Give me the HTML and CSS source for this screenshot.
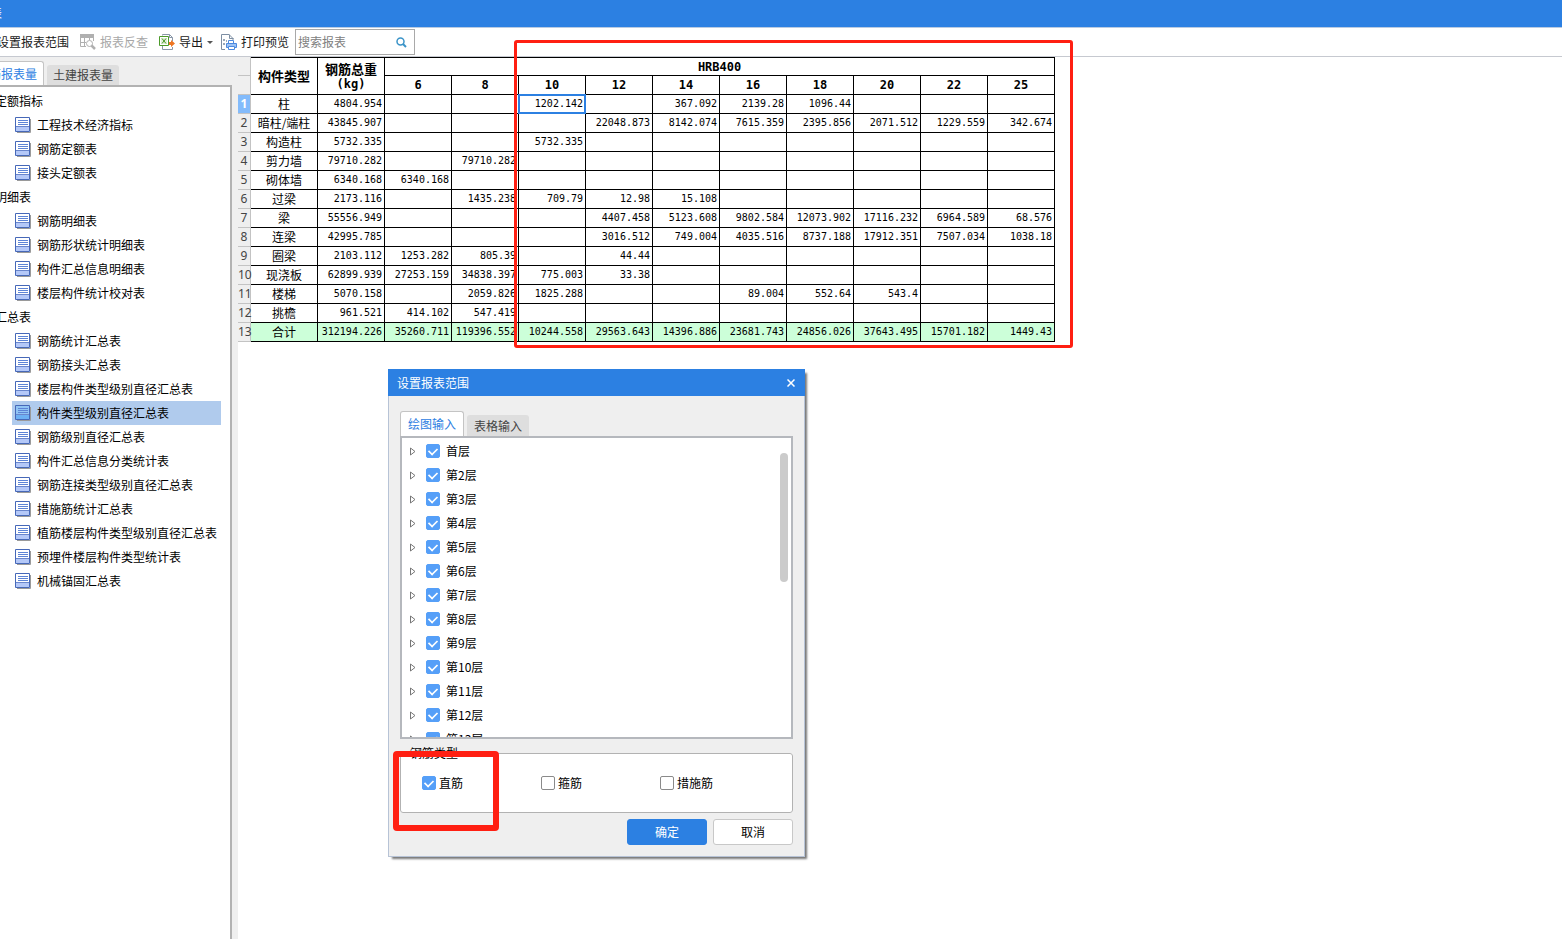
FILE: index.html
```
<!DOCTYPE html>
<html lang="zh-CN">
<head>
<meta charset="utf-8">
<title>报表</title>
<link rel="stylesheet" href="styles.css">
</head>
<body>
<svg class="defs" aria-hidden="true">
  <symbol id="sheet" viewBox="0 0 16 16">
    <path d="M2 15.500h13.500V2" fill="none" stroke="#9a9a9a"/>
    <path d="M.5.5h14v14H.5z" class="sheet-page" stroke="#4668b8"/>
    <path d="M1 10h13v4H1z" class="sheet-foot"/>
    <path d="M1 9.500h13" stroke="#6a86cc"/>
    <path d="M3 3.500h10M3 5.500h10M3 7.500h10" stroke="#5d84d6"/>
  </symbol>
</svg>
<header class="titlebar">报表</header>
<div class="toolbar">
  <button class="tool tool-range">设置报表范围</button>
  <button class="tool tool-check" disabled>
    <svg class="icon" viewBox="0 0 16 16" fill="none" stroke="#b0b0b0">
      <path d="M0 0h14v4H0z" fill="#b0b0b0" stroke="none"/>
      <path d="M.5 1v11.500H6M13.500 3v4M4.500 4v8M9.500 4v2M1 8.500h5"/>
      <circle cx="9.500" cy="9.500" r="3" fill="#fff"/>
      <path d="M11.500 11.500l3.500 3.500" stroke-width="2.500"/>
    </svg>报表反查</button>
  <button class="tool tool-export">
    <svg class="icon" viewBox="0 0 16 16" fill="none">
      <path d="M3.500 1.500v-1h7l3 3v4M13.500 13v2.500h-10V12" stroke="#8a97a8"/>
      <path d="M10.500.5v3h3" stroke="#8a97a8"/>
      <path d="M.5 2.500h9v9h-9z" fill="#fff" stroke="#4c9a2a"/>
      <path d="M2 4h6v6H2z" fill="#e0f0d8"/>
      <path d="M3 4.500l4 5M7 4.500l-4 5" stroke="#4c9a2a"/>
      <path d="M10 8h2V6l4 3.500-4 3.500v-2h-2z" fill="#ee7623"/>
    </svg>导出<span class="caret"></span></button>
  <button class="tool tool-print">
    <svg class="icon" viewBox="0 0 16 16" fill="none">
      <path d="M4 15.500H.5V.5H8l4 4V6" stroke="#7d8ea3"/>
      <path d="M8.500.5v4h4" stroke="#7d8ea3"/>
      <path d="M2 5h2v2H2zM5 6h1v2H5zM2 9h2v2H2z" fill="#9aa8b8"/>
      <path d="M7.500 9.500v-3h5v3" fill="#fff" stroke="#4c8ae0"/>
      <path d="M5.500 9.500h10v4h-10z" fill="#9cc2f5" stroke="#4c8ae0"/>
      <path d="M7.500 12.500h6v3h-6z" fill="#fff" stroke="#4c8ae0"/>
    </svg>打印预览</button>
  <div class="search">
    <input class="search-input" type="text" placeholder="搜索报表" aria-label="搜索报表">
    <svg class="search-icon" viewBox="0 0 11 11" fill="none" stroke="#3b94c8"><circle cx="4.500" cy="4.500" r="3.500" stroke-width="1.500"/><path d="M7 7l3 3" stroke-width="2"/></svg>
  </div>
</div>
<main class="workspace">
  <aside class="sidebar">
    <div class="side-tabs">
      <button class="side-tab side-tab-on">钢筋报表量</button>
      <button class="side-tab">土建报表量</button>
    </div>
    <nav class="side-panel">
      <div class="group">定额指标</div>
      <a class="item" href="#"><svg class="icon"><use href="#sheet"/></svg>工程技术经济指标</a>
      <a class="item" href="#"><svg class="icon"><use href="#sheet"/></svg>钢筋定额表</a>
      <a class="item" href="#"><svg class="icon"><use href="#sheet"/></svg>接头定额表</a>
      <div class="group">明细表</div>
      <a class="item" href="#"><svg class="icon"><use href="#sheet"/></svg>钢筋明细表</a>
      <a class="item" href="#"><svg class="icon"><use href="#sheet"/></svg>钢筋形状统计明细表</a>
      <a class="item" href="#"><svg class="icon"><use href="#sheet"/></svg>构件汇总信息明细表</a>
      <a class="item" href="#"><svg class="icon"><use href="#sheet"/></svg>楼层构件统计校对表</a>
      <div class="group">汇总表</div>
      <a class="item" href="#"><svg class="icon"><use href="#sheet"/></svg>钢筋统计汇总表</a>
      <a class="item" href="#"><svg class="icon"><use href="#sheet"/></svg>钢筋接头汇总表</a>
      <a class="item" href="#"><svg class="icon"><use href="#sheet"/></svg>楼层构件类型级别直径汇总表</a>
      <a class="item item-on" href="#"><svg class="icon"><use href="#sheet"/></svg>构件类型级别直径汇总表</a>
      <a class="item" href="#"><svg class="icon"><use href="#sheet"/></svg>钢筋级别直径汇总表</a>
      <a class="item" href="#"><svg class="icon"><use href="#sheet"/></svg>构件汇总信息分类统计表</a>
      <a class="item" href="#"><svg class="icon"><use href="#sheet"/></svg>钢筋连接类型级别直径汇总表</a>
      <a class="item" href="#"><svg class="icon"><use href="#sheet"/></svg>措施筋统计汇总表</a>
      <a class="item" href="#"><svg class="icon"><use href="#sheet"/></svg>植筋楼层构件类型级别直径汇总表</a>
      <a class="item" href="#"><svg class="icon"><use href="#sheet"/></svg>预埋件楼层构件类型统计表</a>
      <a class="item" href="#"><svg class="icon"><use href="#sheet"/></svg>机械锚固汇总表</a>
    </nav>
  </aside>
  <section class="report">
    <table class="grid">
      <colgroup><col class="col-no"><col class="col" span="12"></colgroup>
      <thead>
        <tr><td class="no"></td><th class="cjk" rowspan="2">构件类型</th><th class="cjk" rowspan="2">钢筋总重<br><span class="unit">(kg)</span></th><th colspan="10">HRB400</th></tr>
        <tr><td class="no"></td><th>6</th><th>8</th><th>10</th><th>12</th><th>14</th><th>16</th><th>18</th><th>20</th><th>22</th><th>25</th></tr>
      </thead>
      <tbody>
        <tr><td class="no no-on">1</td><td class="name">柱</td><td>4804.954</td><td></td><td></td><td class="picked">1202.142</td><td></td><td>367.092</td><td>2139.28</td><td>1096.44</td><td></td><td></td><td></td></tr>
        <tr><td class="no">2</td><td class="name">暗柱/端柱</td><td>43845.907</td><td></td><td></td><td></td><td>22048.873</td><td>8142.074</td><td>7615.359</td><td>2395.856</td><td>2071.512</td><td>1229.559</td><td>342.674</td></tr>
        <tr><td class="no">3</td><td class="name">构造柱</td><td>5732.335</td><td></td><td></td><td>5732.335</td><td></td><td></td><td></td><td></td><td></td><td></td><td></td></tr>
        <tr><td class="no">4</td><td class="name">剪力墙</td><td>79710.282</td><td></td><td>79710.282</td><td></td><td></td><td></td><td></td><td></td><td></td><td></td><td></td></tr>
        <tr><td class="no">5</td><td class="name">砌体墙</td><td>6340.168</td><td>6340.168</td><td></td><td></td><td></td><td></td><td></td><td></td><td></td><td></td><td></td></tr>
        <tr><td class="no">6</td><td class="name">过梁</td><td>2173.116</td><td></td><td>1435.238</td><td>709.79</td><td>12.98</td><td>15.108</td><td></td><td></td><td></td><td></td><td></td></tr>
        <tr><td class="no">7</td><td class="name">梁</td><td>55556.949</td><td></td><td></td><td></td><td>4407.458</td><td>5123.608</td><td>9802.584</td><td>12073.902</td><td>17116.232</td><td>6964.589</td><td>68.576</td></tr>
        <tr><td class="no">8</td><td class="name">连梁</td><td>42995.785</td><td></td><td></td><td></td><td>3016.512</td><td>749.004</td><td>4035.516</td><td>8737.188</td><td>17912.351</td><td>7507.034</td><td>1038.18</td></tr>
        <tr><td class="no">9</td><td class="name">圈梁</td><td>2103.112</td><td>1253.282</td><td>805.39</td><td></td><td>44.44</td><td></td><td></td><td></td><td></td><td></td><td></td></tr>
        <tr><td class="no">10</td><td class="name">现浇板</td><td>62899.939</td><td>27253.159</td><td>34838.397</td><td>775.003</td><td>33.38</td><td></td><td></td><td></td><td></td><td></td><td></td></tr>
        <tr><td class="no">11</td><td class="name">楼梯</td><td>5070.158</td><td></td><td>2059.826</td><td>1825.288</td><td></td><td></td><td>89.004</td><td>552.64</td><td>543.4</td><td></td><td></td></tr>
        <tr><td class="no">12</td><td class="name">挑檐</td><td>961.521</td><td>414.102</td><td>547.419</td><td></td><td></td><td></td><td></td><td></td><td></td><td></td><td></td></tr>
        <tr class="total"><td class="no">13</td><td class="name">合计</td><td>312194.226</td><td>35260.711</td><td>119396.552</td><td>10244.558</td><td>29563.643</td><td>14396.886</td><td>23681.743</td><td>24856.026</td><td>37643.495</td><td>15701.182</td><td>1449.43</td></tr>
      </tbody>
    </table>
    <div class="mark mark-table"></div>
  </section>
</main>
<div class="dialog" role="dialog" aria-labelledby="dialog-title">
  <div class="dialog-head">
    <span id="dialog-title">设置报表范围</span>
    <button class="close" aria-label="关闭"><svg class="close-icon" viewBox="0 0 8 8" stroke="#fff" stroke-width="1.500"><path d="M.5.5l7 7M7.500.5l-7 7"/></svg></button>
  </div>
  <div class="dialog-body">
    <div class="tabs">
      <button class="tab tab-on">绘图输入</button>
      <button class="tab">表格输入</button>
    </div>
    <div class="floors">
      <div class="floor"><button class="expand" aria-label="展开"><svg class="tri" viewBox="0 0 6 9"><path d="M.5 1v7l4.500-3.500z"/></svg></button><label class="choice"><input class="check" type="checkbox" checked>首层</label></div>
      <div class="floor"><button class="expand" aria-label="展开"><svg class="tri" viewBox="0 0 6 9"><path d="M.5 1v7l4.500-3.500z"/></svg></button><label class="choice"><input class="check" type="checkbox" checked>第2层</label></div>
      <div class="floor"><button class="expand" aria-label="展开"><svg class="tri" viewBox="0 0 6 9"><path d="M.5 1v7l4.500-3.500z"/></svg></button><label class="choice"><input class="check" type="checkbox" checked>第3层</label></div>
      <div class="floor"><button class="expand" aria-label="展开"><svg class="tri" viewBox="0 0 6 9"><path d="M.5 1v7l4.500-3.500z"/></svg></button><label class="choice"><input class="check" type="checkbox" checked>第4层</label></div>
      <div class="floor"><button class="expand" aria-label="展开"><svg class="tri" viewBox="0 0 6 9"><path d="M.5 1v7l4.500-3.500z"/></svg></button><label class="choice"><input class="check" type="checkbox" checked>第5层</label></div>
      <div class="floor"><button class="expand" aria-label="展开"><svg class="tri" viewBox="0 0 6 9"><path d="M.5 1v7l4.500-3.500z"/></svg></button><label class="choice"><input class="check" type="checkbox" checked>第6层</label></div>
      <div class="floor"><button class="expand" aria-label="展开"><svg class="tri" viewBox="0 0 6 9"><path d="M.5 1v7l4.500-3.500z"/></svg></button><label class="choice"><input class="check" type="checkbox" checked>第7层</label></div>
      <div class="floor"><button class="expand" aria-label="展开"><svg class="tri" viewBox="0 0 6 9"><path d="M.5 1v7l4.500-3.500z"/></svg></button><label class="choice"><input class="check" type="checkbox" checked>第8层</label></div>
      <div class="floor"><button class="expand" aria-label="展开"><svg class="tri" viewBox="0 0 6 9"><path d="M.5 1v7l4.500-3.500z"/></svg></button><label class="choice"><input class="check" type="checkbox" checked>第9层</label></div>
      <div class="floor"><button class="expand" aria-label="展开"><svg class="tri" viewBox="0 0 6 9"><path d="M.5 1v7l4.500-3.500z"/></svg></button><label class="choice"><input class="check" type="checkbox" checked>第10层</label></div>
      <div class="floor"><button class="expand" aria-label="展开"><svg class="tri" viewBox="0 0 6 9"><path d="M.5 1v7l4.500-3.500z"/></svg></button><label class="choice"><input class="check" type="checkbox" checked>第11层</label></div>
      <div class="floor"><button class="expand" aria-label="展开"><svg class="tri" viewBox="0 0 6 9"><path d="M.5 1v7l4.500-3.500z"/></svg></button><label class="choice"><input class="check" type="checkbox" checked>第12层</label></div>
      <div class="floor"><button class="expand" aria-label="展开"><svg class="tri" viewBox="0 0 6 9"><path d="M.5 1v7l4.500-3.500z"/></svg></button><label class="choice"><input class="check" type="checkbox" checked>第13层</label></div>
      <div class="thumb"></div>
    </div>
    <fieldset class="kinds">
      <legend class="legend">钢筋类型</legend>
      <div class="kind-row">
        <label class="choice choice-tight"><input class="check" type="checkbox" checked>直筋</label>
        <label class="choice choice-tight"><input class="check" type="checkbox">箍筋</label>
        <label class="choice choice-tight"><input class="check" type="checkbox">措施筋</label>
      </div>
    </fieldset>
    <div class="actions">
      <button class="btn btn-ok">确定</button>
      <button class="btn">取消</button>
    </div>
  </div>
  <div class="mark mark-kind"></div>
</div>
</body>
</html>
```

FILE: styles.css
```
* { box-sizing: border-box; }

body {
  margin: 0;
  min-height: 100vh;
  display: flex;
  flex-direction: column;
  overflow: hidden;
  background: #fff;
  color: #000;
  font: 12px/16px "Noto Sans CJK SC", sans-serif;
}

button, input {
  margin: 0;
  padding: 0;
  border: 0;
  background: none;
  color: inherit;
  font: inherit;
}

.defs { position: absolute; width: 0; height: 0; }
.icon { width: 16px; height: 16px; flex: none; }

/* Title bar and toolbar */
.titlebar {
  height: 28px;
  padding: 5px 0;
  margin-left: -22px;
  background: #2c80e2;
  border-bottom: 1px solid #b9cbe2;
  color: #fff;
}

.toolbar {
  display: flex;
  align-items: center;
  height: 29px;
  border-bottom: 1px solid #c6c9d0;
}
.tool {
  display: flex;
  align-items: center;
  gap: 4px;
  white-space: nowrap;
  color: #1a1a1a;
}
.tool-range { margin-left: -3px; }
.tool-check { margin-left: 11px; color: #a8a8a8; }
.tool-export { margin-left: 11px; }
.tool-print { margin-left: 8px; }
.caret {
  border: 3px solid transparent;
  border-top-color: #555;
  border-bottom: 0;
}
.search {
  display: flex;
  align-items: center;
  width: 120px;
  height: 26px;
  margin-left: 6px;
  padding: 0 7px 0 2px;
  border: 1px solid #a9a9a9;
}
.search-input { flex: 1; min-width: 0; outline: 0; }
.search-input::placeholder { color: #808080; opacity: 1; }
.search-icon { width: 11px; height: 11px; }

.workspace { flex: 1; display: flex; }

/* Report list */
.sidebar {
  flex: none;
  display: flex;
  flex-direction: column;
  width: 238px;
  padding: 4px 6px 0 0;
  background: #efefef;
}
.side-tabs { display: flex; align-items: flex-end; gap: 3px; margin-left: -30px; }
.side-tab {
  height: 20px;
  padding: 0 6px;
  border-radius: 3px 3px 0 0;
  background: #dedede;
  color: #444;
}
.side-tab-on {
  height: 24px;
  border: 1px solid #c4c4c4;
  border-bottom: 0;
  background: #fff;
  color: #2c80e2;
}
.side-panel {
  flex: 1;
  padding: 2px 9px 0 12px;
  border: solid #b2b2b2;
  border-width: 2px 2px 0 0;
  background: #fff;
}
.group { height: 24px; padding: 4px 0; margin-left: -17px; }
.item {
  display: flex;
  align-items: center;
  gap: 6px;
  height: 24px;
  padding-left: 3px;
  white-space: nowrap;
  color: inherit;
  text-decoration: none;
}
.sheet-page { fill: var(--page, #fff); }
.sheet-foot { fill: var(--foot, #b4c8f8); }
.item-on { --page: #90c4f4; --foot: #6cb0f4; background: #b0cbed; }

/* Report grid */
.report { position: relative; flex: 1; }
.grid {
  width: 817px;
  table-layout: fixed;
  border-collapse: separate;
  border-spacing: 0;
}
.col-no { width: 13px; }
.col { width: 67px; }
.grid th, .grid td {
  height: 19px;
  padding: 0 2px 0 0;
  border: solid #000;
  border-width: 0 1px 1px 0;
  font: 10px/16px "DejaVu Sans Mono", monospace;
  text-align: right;
  white-space: nowrap;
}
.grid th {
  padding: 0;
  font-size: 12px;
  font-weight: bold;
  text-align: center;
}
.grid tr:first-child th { border-top-width: 1px; }
.grid .cjk { font: bold 13px/14px "Noto Sans CJK SC", sans-serif; }
.unit { font: bold 12px/14px "DejaVu Sans Mono", monospace; }
.grid .name { padding: 0; font: 12px/16px "Noto Sans CJK SC", sans-serif; text-align: center; }
.grid .no {
  padding: 0;
  border-color: #c3c3c3;
  background: #efefef;
  color: #444;
  font: 12px/18px "Noto Sans", sans-serif;
  text-align: center;
}
.grid .no-on { background: #83bbfb; color: #fff; font-weight: bold; }
.total td { background: #ccffd9; }
.picked { position: relative; }
.picked::after {
  content: "";
  position: absolute;
  inset: -1px;
  border: 2px solid #2c80e2;
}

/* Red highlight frames */
.mark { position: absolute; pointer-events: none; border: solid #ff1f12; }
.mark-table {
  left: 276px;
  top: -17px;
  width: 559px;
  height: 308px;
  border-width: 3px;
  border-radius: 3px;
}
.mark-kind {
  left: 4px;
  top: 382px;
  width: 106px;
  height: 80px;
  border-width: 6px;
  border-radius: 4px;
}

/* Range dialog */
.dialog {
  position: absolute;
  left: 388px;
  top: 369px;
  width: 417px;
  border: 1px solid #b7c3d6;
  border-top: 0;
  background: #efefef;
  box-shadow: 3px 3px 2px -1px #777;
}
.dialog-head {
  display: flex;
  align-items: center;
  justify-content: space-between;
  height: 27px;
  margin: 0 -1px;
  padding: 0 10px 0 9px;
  background: #2c80e2;
  color: #fff;
}
.close { display: flex; }
.close-icon { width: 8px; height: 8px; }
.dialog-body { padding: 15px 11px 11px; }
.tabs { display: flex; align-items: flex-end; gap: 3px; }
.tab {
  height: 21px;
  padding: 0 7px;
  border-radius: 3px 3px 0 0;
  background: #dedede;
  color: #444;
}
.tab-on {
  height: 25px;
  border: 1px solid #c4c4c4;
  border-bottom: 0;
  background: #fff;
  color: #2c80e2;
}
.floors {
  position: relative;
  height: 303px;
  padding: 1px 8px;
  border: 2px solid #b5b8bd;
  background: #fff;
  overflow: hidden;
}
.floor { display: flex; align-items: center; gap: 10px; height: 24px; }
.expand { display: flex; }
.tri { width: 6px; height: 9px; fill: none; stroke: #777; }
.choice { display: flex; align-items: center; gap: 6px; white-space: nowrap; }
.choice-tight { gap: 3px; }
.check {
  appearance: none;
  display: grid;
  place-items: center;
  width: 14px;
  height: 14px;
  border: 1px solid #8a8a8a;
  border-radius: 2px;
  background: #fff;
}
.check:checked { border-color: #559ff8; background: #559ff8; }
.check:checked::before {
  content: "";
  width: 8px;
  height: 5px;
  border: solid #fff;
  border-width: 0 0 2px 2px;
  transform: translateY(-1px) rotate(-45deg) scale(0.85);
}
.thumb {
  position: absolute;
  right: 3px;
  top: 15px;
  width: 8px;
  height: 129px;
  border-radius: 4px;
  background: #cbcbcb;
}
.kinds {
  min-width: 0;
  height: 68px;
  margin: 6px 0 0;
  padding: 0 0 0 21px;
  border: 1px solid #b2b2b2;
  border-radius: 3px;
  background: #fff;
}
.legend { margin-left: -12px; padding: 0; }
.kind-row {
  display: grid;
  grid-template-columns: repeat(3, 119px);
  padding-top: 14px;
}
.actions { display: flex; justify-content: flex-end; gap: 6px; margin-top: 6px; }
.btn {
  width: 80px;
  height: 26px;
  border: 1px solid #c8c8c8;
  border-radius: 3px;
  background: #fff;
}
.btn-ok { border-color: #2c80e2; background: #2c80e2; color: #fff; }
```
